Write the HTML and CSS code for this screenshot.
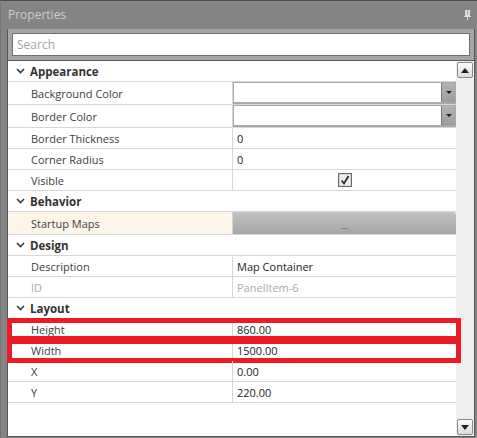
FILE: index.html
```html
<!DOCTYPE html>
<html lang="en">
<head>
  <meta charset="UTF-8" />
  <title>Properties</title>
  <link rel="stylesheet" href="styles.css">
</head>
<body>
  <div class="toolwin">
    <div class="titlebar">
      <span class="title">Properties</span>
      <svg class="pin" width="8" height="10" viewBox="0 0 8 10">
        <rect x="1" y="0" width="5" height="6" fill="#dcdcdc"/>
        <rect x="3" y="0" width="1" height="5" fill="#a8a8a8"/>
        <rect x="0" y="6" width="7" height="1" fill="#dcdcdc"/>
        <rect x="3" y="7" width="1" height="3" fill="#dcdcdc"/>
      </svg>
    </div>

    <div class="panel">
      <div class="searchbar">
        <div class="search">Search</div>
      </div>

      <div class="content">
        <div class="grid">
          <div class="cat"><svg class="chev" width="9" height="6" viewBox="0 0 9 6"><path d="M1 1 L4.5 4.5 L8 1" fill="none" stroke="#3a3a3a" stroke-width="1.6"/></svg>Appearance</div>
          <div class="row tall">
            <div class="name">Background Color</div>
            <div class="val"><div class="combo"><span class="drop"></span></div></div>
          </div>
          <div class="row tall">
            <div class="name">Border Color</div>
            <div class="val"><div class="combo"><span class="drop"></span></div></div>
          </div>
          <div class="row">
            <div class="name">Border Thickness</div>
            <div class="val">0</div>
          </div>
          <div class="row">
            <div class="name">Corner Radius</div>
            <div class="val">0</div>
          </div>
          <div class="row">
            <div class="name">Visible</div>
            <div class="val center">
              <span class="check">
                <svg width="12" height="12" viewBox="0 0 12 12"><path d="M2.5 6.5 L5 9.5 L9.5 2" fill="none" stroke="#2e2e2e" stroke-width="1.8"/></svg>
              </span>
            </div>
          </div>

          <div class="cat"><svg class="chev" width="9" height="6" viewBox="0 0 9 6"><path d="M1 1 L4.5 4.5 L8 1" fill="none" stroke="#3a3a3a" stroke-width="1.6"/></svg>Behavior</div>
          <div class="row tall selected">
            <div class="name">Startup Maps</div>
            <div class="val"><div class="dots">...</div></div>
          </div>

          <div class="cat"><svg class="chev" width="9" height="6" viewBox="0 0 9 6"><path d="M1 1 L4.5 4.5 L8 1" fill="none" stroke="#3a3a3a" stroke-width="1.6"/></svg>Design</div>
          <div class="row">
            <div class="name">Description</div>
            <div class="val">Map Container</div>
          </div>
          <div class="row disabled">
            <div class="name">ID</div>
            <div class="val">PanelItem-6</div>
          </div>

          <div class="cat"><svg class="chev" width="9" height="6" viewBox="0 0 9 6"><path d="M1 1 L4.5 4.5 L8 1" fill="none" stroke="#3a3a3a" stroke-width="1.6"/></svg>Layout</div>
          <div class="row mark">
            <div class="name">Height</div>
            <div class="val">860.00</div>
          </div>
          <div class="row mark mark-low">
            <div class="name">Width</div>
            <div class="val">1500.00</div>
          </div>
          <div class="row">
            <div class="name">X</div>
            <div class="val">0.00</div>
          </div>
          <div class="row">
            <div class="name">Y</div>
            <div class="val">220.00</div>
          </div>
        </div>

        <div class="scrollbar">
          <span class="sbtn"><svg width="8" height="5" viewBox="0 0 8 5"><path d="M0 5 L4 0 L8 5 Z" fill="#222"/></svg></span>
          <span class="sbtn"><svg width="8" height="5" viewBox="0 0 8 5"><path d="M0 0 L4 5 L8 0 Z" fill="#222"/></svg></span>
        </div>
      </div>
    </div>
  </div>
</body>
</html>
```

FILE: styles.css
```css
html, body {
  margin: 0;
  padding: 0;
}

body {
  font-family: "Open Sans", "Noto Sans", sans-serif;
  font-size: 11px;
  color: #3c3c3c;
  background-color: #848484;
}

.toolwin {
  width: 477px;
  height: 438px;
  box-sizing: border-box;
  border-top: 1px solid #4e4e4e;
  border-left: 1px solid #767676;
  background-color: #848484;
  display: flex;
  flex-direction: column;
}

.titlebar {
  height: 28px;
  display: flex;
  align-items: center;
  justify-content: space-between;
  padding: 0 4px 1px 7px;
  box-sizing: border-box;
}

.title {
  color: #cdcdcd;
  font-size: 12px;
}

.pin {
  display: block;
  margin-right: 1px;
}

.panel {
  position: relative;
  margin: 0 2px 1px 6px;
  flex: 1;
  display: flex;
  flex-direction: column;
  border: 1px solid #555;
  border-top: none;
  background-color: white;
}

.searchbar {
  background-color: #a6a6a6;
  padding: 4px 4px 4px 4px;
  border-bottom: 1px solid #5c5c5c;
}

.search {
  height: 21px;
  line-height: 21px;
  border: 1px solid #707070;
  background-color: white;
  color: #a3a3a3;
  font-size: 12px;
  padding-left: 4px;
}

.content {
  flex: 1;
  display: flex;
}

.grid {
  width: 448px;
}

.cat {
  height: 20px;
  display: flex;
  align-items: center;
  border-bottom: 1px solid #d6d6d6;
  font-weight: bold;
  color: #333;
  font-size: 11.5px;
}

.chev {
  margin: 0 5px 0 8px;
}

.row {
  position: relative;
  display: flex;
  height: 20px;
  border-bottom: 1px solid #d6d6d6;
}

.row.tall {
  height: 22px;
}

.name {
  width: 201px;
  padding-left: 23px;
  border-right: 1px solid #d6d6d6;
  display: flex;
  align-items: center;
  color: #404040;
}

.val {
  flex: 1;
  display: flex;
  align-items: center;
  padding-left: 4px;
  color: #222;
}

.val.center {
  justify-content: center;
  padding-left: 0;
}

.disabled .name,
.disabled .val {
  color: #a8a8a8;
}

.selected .name {
  background-color: #fdf6e8;
}

.combo {
  flex: 1;
  align-self: stretch;
  margin-left: -4px;
  border: 1px solid #a9a9a9;
  border-bottom-width: 2px;
  background-color: white;
  display: flex;
  justify-content: flex-end;
}

.drop {
  width: 13px;
  border-left: 1px solid #7a7a7a;
  background: linear-gradient(#b3b3b3, #9c9c9c);
  position: relative;
}

.drop::after {
  content: "";
  position: absolute;
  left: 4px;
  top: 8px;
  border-left: 3px solid transparent;
  border-right: 3px solid transparent;
  border-top: 3px solid #222;
}

.check {
  width: 12px;
  height: 12px;
  border: 1px solid #6a6a6a;
  box-shadow: inset 0 0 0 1px #d8d8d8;
  background-color: #ececec;
  display: flex;
}

.dots {
  flex: 1;
  align-self: stretch;
  margin-left: -4px;
  background: linear-gradient(#c3c3c3, #a6a6a6);
  border-top-right-radius: 3px;
  text-align: center;
  line-height: 28px;
  font-size: 9px;
  color: #333;
}

.mark::after {
  content: "";
  position: absolute;
  left: -1px;
  right: -5px;
  top: -1px;
  bottom: -2px;
  border: 5px solid #ed1c24;
}

.mark-low::after {
  top: -1px;
  bottom: -3px;
}

.scrollbar {
  width: 18px;
  background-color: #efefef;
  display: flex;
  flex-direction: column;
  justify-content: space-between;
  padding: 1px 0;
}

.sbtn {
  width: 14px;
  height: 14px;
  margin-left: 1px;
  border: 1px solid #8a8a8a;
  border-radius: 2px;
  background: linear-gradient(#fdfdfd, #dcdcdc);
  display: flex;
  align-items: center;
  justify-content: center;
}
```
